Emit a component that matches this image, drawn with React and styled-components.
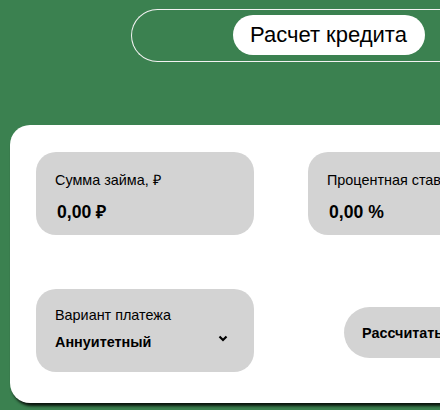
import React from "react";
import styled, { createGlobalStyle } from "styled-components";

const GlobalStyle = createGlobalStyle`
  html, body {
    margin: 0;
    padding: 0;
    background: #3b8150;
    overflow: hidden;
  }
  body {
    font-family: "Liberation Sans", Arial, sans-serif;
  }
`;

const Page = styled.div`
  width: 440px;
  height: 410px;
  overflow: hidden;
  background: #3b8150;
`;

const Header = styled.header`
  padding: 9px 0 0 131px;
  height: 125px;
  box-sizing: border-box;
`;

const Outline = styled.div`
  width: 420px;
  height: 53px;
  box-sizing: border-box;
  border: 1px solid #f2f2f2;
  border-right: none;
  border-radius: 27px 0 0 27px;
  padding: 5px 0 0 101px;
`;

const Title = styled.div`
  display: inline-flex;
  align-items: center;
  height: 40px;
  width: 192px;
  box-sizing: border-box;
  padding-left: 17px;
  background: #fff;
  border-radius: 20px;
  font-size: 22px;
  color: #000;
`;

const Card = styled.main`
  margin-left: 10px;
  width: 560px;
  height: 278px;
  box-sizing: border-box;
  background: #fff;
  border-radius: 20px;
  box-shadow: 2px 3px 3px rgba(0, 0, 0, 0.85);
  padding: 27px 0 0 26px;
  display: grid;
  grid-template-columns: 218px 218px;
  grid-auto-rows: 83px;
  column-gap: 54px;
  row-gap: 54px;
`;

const Field = styled.div`
  background: #d3d3d3;
  border-radius: 20px;
  box-sizing: border-box;
  padding: ${(p) => (p.$select ? "18px 27px 0 19px" : "20px 0 0 19px")};
  color: #000;
`;

const Label = styled.div`
  font-size: 14.4px;
  line-height: 17px;
  white-space: nowrap;
`;

const Value = styled.div`
  margin-top: 13px;
  margin-left: 2px;
  font-size: 17.6px;
  line-height: 20px;
  font-weight: bold;
`;

const SelectRow = styled.div`
  margin-top: 10px;
  display: flex;
  align-items: center;
  justify-content: space-between;
  font-size: 14.4px;
  line-height: 17px;
  font-weight: bold;
`;

const Button = styled.button`
  align-self: center;
  justify-self: start;
  margin: 4px 0 0 36px;
  height: 51px;
  width: 170px;
  border: none;
  border-radius: 26px;
  background: #d3d3d3;
  padding: 0 0 0 18px;
  text-align: left;
  font-family: inherit;
  font-size: 14.4px;
  font-weight: bold;
  color: #000;
  white-space: nowrap;
`;

const Chevron = () => (
  <svg width="10" height="7" viewBox="0 0 10 7" style={{ marginTop: -8, marginRight: -1 }}>
    <path d="M1.5 1.5 L5 5 L8.5 1.5" fill="none" stroke="#000" strokeWidth="2.2" />
  </svg>
);

export default function App() {
  return (
    <Page>
      <GlobalStyle />
      <Header>
        <Outline>
          <Title>Расчет кредита</Title>
        </Outline>
      </Header>
      <Card>
        <Field>
          <Label>Сумма займа, ₽</Label>
          <Value>0,00 ₽</Value>
        </Field>
        <Field>
          <Label>Процентная ставка</Label>
          <Value>0,00 %</Value>
        </Field>
        <Field $select>
          <Label>Вариант платежа</Label>
          <SelectRow>
            <span>Аннуитетный</span>
            <Chevron />
          </SelectRow>
        </Field>
        <Button>Рассчитать</Button>
      </Card>
    </Page>
  );
}
